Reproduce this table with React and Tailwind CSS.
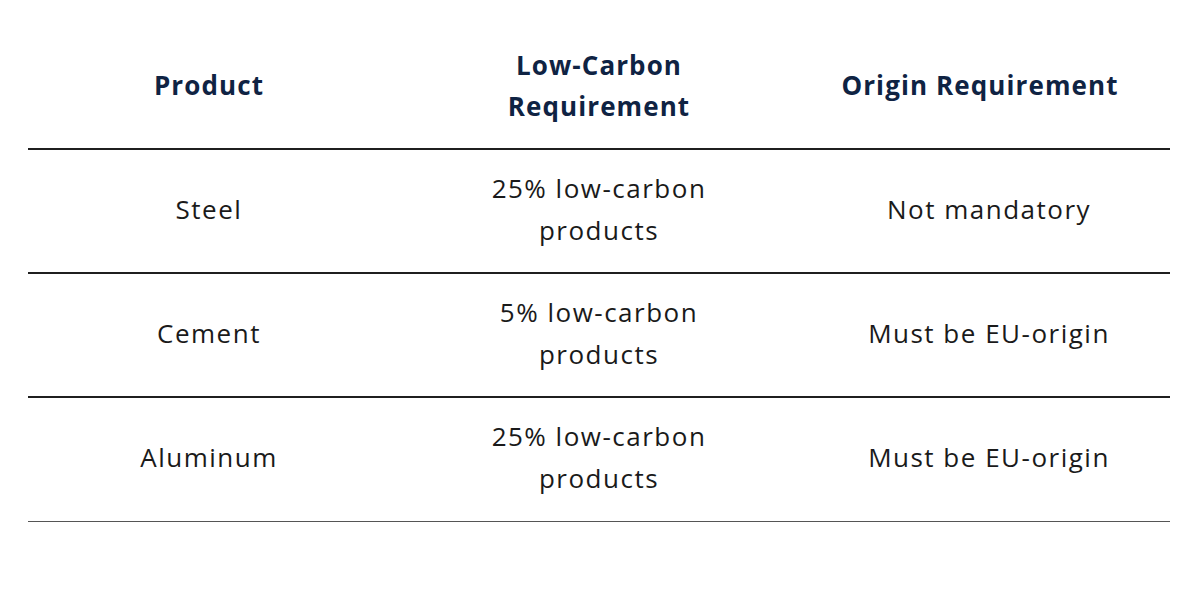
import React from 'react';

const rows = [
  { product: 'Steel', carbon: ['25% low-carbon', 'products'], origin: 'Not mandatory' },
  { product: 'Cement', carbon: ['5% low-carbon', 'products'], origin: 'Must be EU-origin' },
  { product: 'Aluminum', carbon: ['25% low-carbon', 'products'], origin: 'Must be EU-origin' },
];

const App = () => {
  return (
    <div className="w-[1200px] h-[605px] bg-white pt-[23px] px-[28px]" style={{ fontFamily: '"Open Sans", "Liberation Sans", sans-serif' }}>
      <table className="w-[1142px] table-fixed border-collapse">
        <colgroup>
          <col className="w-[362px]" />
          <col className="w-[418px]" />
          <col className="w-[362px]" />
        </colgroup>
        <thead>
          <tr className="border-b-2 border-[#1f1f1f] text-[#0f2343] text-[26px] font-bold leading-[41px] tracking-[1.1px]">
            <th className="h-[126px] text-center align-middle">Product</th>
            <th className="text-center align-middle">Low-Carbon<br />Requirement</th>
            <th className="text-center align-middle pr-[18px]">Origin Requirement</th>
          </tr>
        </thead>
        <tbody className="text-[#1a1a1a] text-[26px] leading-[42px] tracking-[1.5px]">
          {rows.map((row, i) => (
            <tr
              key={row.product}
              className={i === rows.length - 1 ? 'border-b border-[#555]' : 'border-b-2 border-[#1f1f1f]'}
            >
              <td className="h-[124px] text-center align-middle">
                <div className="-mt-[4px]">{row.product}</div>
              </td>
              <td className="text-center align-middle">
                <div className="-mt-[4px]">{row.carbon[0]}<br />{row.carbon[1]}</div>
              </td>
              <td className="text-center align-middle">
                <div className="-mt-[4px]">{row.origin}</div>
              </td>
            </tr>
          ))}
        </tbody>
      </table>
    </div>
  );
};

export default App;
